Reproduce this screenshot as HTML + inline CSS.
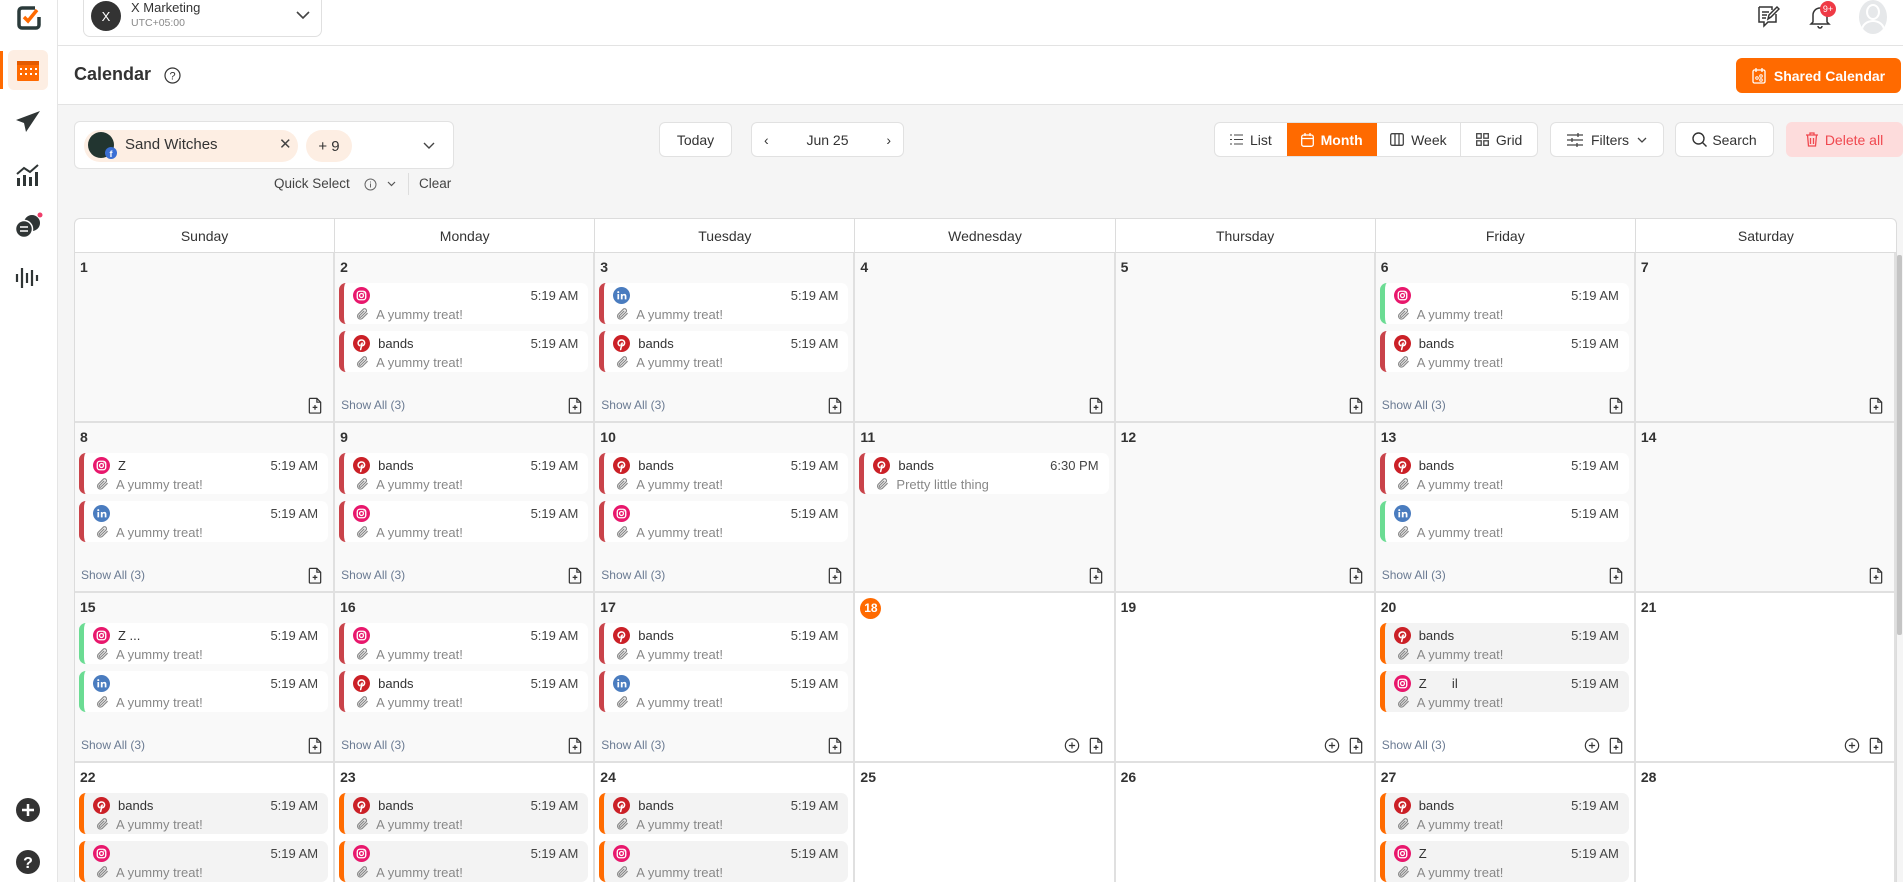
<!DOCTYPE html>
<html><head><meta charset="utf-8">
<style>
*{box-sizing:border-box;margin:0;padding:0}
html,body{width:1903px;height:882px;overflow:hidden}
body{font-family:"Liberation Sans",sans-serif;background:#f5f5f5;color:#333;position:relative}
.abs{position:absolute}
#side{left:0;top:0;width:58px;height:882px;background:#fff;border-right:1px solid #e5e5e5}
#top{left:58px;top:0;right:0;height:46px;background:#fff;border-bottom:1px solid #e3e3e3}
#hdr{left:58px;top:46px;right:0;height:59px;background:#fff;border-bottom:1px solid #e3e3e3}
.btn{position:absolute;background:#fff;border:1px solid #e1e1e1;border-radius:6px;display:flex;align-items:center;justify-content:center;font-size:14px;color:#333;height:35px;top:122px}
#cal{left:74px;top:218px;width:1823px;height:664px;border:1px solid #dcdcdc;border-bottom:none;border-radius:6px 6px 0 0;background:#fff;overflow:hidden}
.hd{display:grid;grid-template-columns:repeat(7,1fr);height:34px;border-bottom:1px solid #dcdcdc}
.hd div{display:flex;align-items:center;justify-content:center;font-size:14px;color:#333;border-right:1px solid #dcdcdc}
.gr{display:grid;grid-template-columns:repeat(7,1fr);grid-auto-rows:170px}
.c{position:relative;border-right:2px solid #e0e0e0;border-bottom:2px solid #e0e0e0;background:#fff}
.c.p{background:#f9f9f9}
.n{font-size:14px;color:#333;padding:6px 0 0 5px;height:30px;font-weight:bold}
.ev{margin:0 5px 7px 4px;height:41px;border-left:5px solid #c9434a;border-radius:7px;background:#f3f3f3;padding:4px 10px 0 9px}
.p .ev{background:#fff}
.ev.g{border-left-color:#6bdc93}.ev.o{border-left-color:#ff6b00}
.l1{display:flex;align-items:center;height:17px;font-size:13px;color:#333}
.l1 svg{width:17px;height:17px;margin-right:8px;flex:none}
.l1 .t{margin-left:auto;color:#444}
.l2{display:flex;align-items:center;height:18px;font-size:13px;color:#888;margin-top:1px}
.l2 svg{width:14px;height:14px;margin:0 7px 0 2px;stroke:#888}
.ft{position:absolute;left:6px;right:10px;bottom:7px;display:flex;align-items:center;height:18px}
.sa{font-size:12px;color:#6a7a92}
.ico{margin-left:auto;display:flex;gap:8px}
.ico svg{width:16px;height:17px}
</style></head><body>
<svg width="0" height="0" style="position:absolute">
<defs>
<symbol id="ig" viewBox="0 0 20 20"><circle cx="10" cy="10" r="10" fill="#e8176c"/><rect x="5" y="5" width="10" height="10" rx="3" fill="none" stroke="#fff" stroke-width="1.6"/><circle cx="10" cy="10" r="2.3" fill="none" stroke="#fff" stroke-width="1.5"/><circle cx="13" cy="7" r=".8" fill="#fff"/></symbol>
<symbol id="pi" viewBox="0 0 20 20"><circle cx="10" cy="10" r="10" fill="#cb2027"/><path d="M9 17l1.8-7.5M8 12.5c-2-.8-2.5-3-1.5-4.8 1.2-2 4.5-2.4 6.2-.8 1.6 1.6 1 4.8-1 5.4-1.3.4-2.3-.4-2-1.5" fill="none" stroke="#fff" stroke-width="1.8" stroke-linecap="round"/></symbol>
<symbol id="li" viewBox="0 0 20 20"><circle cx="10" cy="10" r="10" fill="#4a7cbf"/><rect x="5.2" y="8.3" width="2" height="6.2" fill="#fff"/><circle cx="6.2" cy="6" r="1.2" fill="#fff"/><path d="M9.2 14.5V8.3h1.9v1c.5-.8 1.3-1.2 2.3-1.2 1.6 0 2.4 1 2.4 2.8v3.6h-2v-3.3c0-.9-.3-1.4-1.1-1.4s-1.4.6-1.4 1.5v3.2z" fill="#fff"/></symbol>
<symbol id="clip" viewBox="0 0 24 24"><path d="M21 11l-8.6 8.6a5 5 0 01-7-7L14 4a3.3 3.3 0 014.7 4.7L10 17.3a1.7 1.7 0 01-2.4-2.4L15.5 7" fill="none" stroke-width="2" stroke-linecap="round"/></symbol>
<symbol id="fp" viewBox="0 0 16 18"><path d="M2 1.5h8l4 4v10.5a1 1 0 01-1 1H3a1 1 0 01-1-1V2.5a1 1 0 011-1zM10 1.5v4h4M8 8.5v5M5.5 11h5" fill="none" stroke="#333" stroke-width="1.3"/></symbol>
<symbol id="pc" viewBox="0 0 18 18"><circle cx="9" cy="9" r="7.5" fill="none" stroke="#333" stroke-width="1.3"/><path d="M9 5.5v7M5.5 9h7" stroke="#333" stroke-width="1.3"/></symbol>
</defs></svg>

<div id="side" class="abs">
 <svg class="abs" style="left:16px;top:5px" width="26" height="26" viewBox="0 0 26 26"><path d="M19 3H6a3 3 0 00-3 3v14a3 3 0 003 3h14a3 3 0 003-3v-8" fill="none" stroke="#2a3a3a" stroke-width="3.5"/><path d="M8 12l4 4 9-11" fill="none" stroke="#ff6a00" stroke-width="3.5"/></svg>
 <div class="abs" style="left:0;top:51px;width:3px;height:38px;background:#ff6a00"></div>
 <div class="abs" style="left:8px;top:50px;width:40px;height:40px;background:#fdeee3;border-radius:6px"></div>
 <svg class="abs" style="left:16px;top:58px" width="24" height="24" viewBox="0 0 24 24"><rect x="1" y="3" width="22" height="20" rx="1" fill="#ff6a00"/><rect x="1" y="3" width="22" height="4" fill="#e35a00"/><g fill="#fff"><rect x="4" y="10" width="2" height="2"/><rect x="9" y="10" width="2" height="2"/><rect x="14" y="10" width="2" height="2"/><rect x="19" y="10" width="2" height="2"/><rect x="4" y="15" width="2" height="2"/><rect x="9" y="15" width="2" height="2"/><rect x="14" y="15" width="2" height="2"/><rect x="19" y="15" width="2" height="2"/></g></svg>
 <svg class="abs" style="left:15px;top:110px" width="26" height="24" viewBox="0 0 26 24"><path d="M25 1L1 10l8 3 2 9 4-6 10-15zM9 13L25 1" fill="#2f3535"/></svg>
 <svg class="abs" style="left:15px;top:163px" width="26" height="24" viewBox="0 0 26 24"><path d="M2 11l7-6 6 4 8-7" fill="none" stroke="#2f3535" stroke-width="2"/><g fill="#2f3535"><rect x="2" y="15" width="3" height="8"/><rect x="8" y="12" width="3" height="11"/><rect x="14" y="14" width="3" height="9"/><rect x="20" y="9" width="3" height="14"/></g></svg>
 <svg class="abs" style="left:14px;top:212px" width="30" height="28" viewBox="0 0 30 28"><circle cx="18" cy="11" r="8" fill="#2f3535"/><circle cx="10" cy="17" r="8.5" fill="#2f3535" stroke="#fff" stroke-width="1.5"/><path d="M6 15h8M6 19h8" stroke="#fff" stroke-width="1.6"/><circle cx="26" cy="3" r="2.5" fill="#ef3e6a"/></svg>
 <svg class="abs" style="left:15px;top:265px" width="26" height="26" viewBox="0 0 26 26"><g stroke="#2f3535" stroke-width="2.2"><path d="M2 9v8M7 3v20M12 8v10M17 5v16M22 10v6"/></g></svg>
 <svg class="abs" style="left:16px;top:798px" width="24" height="24"><circle cx="12" cy="12" r="12" fill="#333"/><path d="M12 6v12M6 12h12" stroke="#fff" stroke-width="2.5"/></svg>
 <svg class="abs" style="left:16px;top:850px" width="24" height="24"><circle cx="12" cy="12" r="12" fill="#333"/><text x="12" y="18" font-family="Liberation Sans" font-size="16" font-weight="bold" fill="#fff" text-anchor="middle">?</text></svg>
</div>

<div id="top" class="abs">
 <div class="abs" style="left:25px;top:-1px;width:239px;height:38px;border:1px solid #e0e0e0;border-top:none;border-radius:0 0 7px 7px;background:#fff">
  <div class="abs" style="left:7px;top:2px;width:30px;height:30px;border-radius:50%;background:#333;color:#fff;font-size:13px;display:flex;align-items:center;justify-content:center">X</div>
  <div class="abs" style="left:47px;top:1px;font-size:13px;color:#333">X Marketing</div>
  <div class="abs" style="left:47px;top:18px;font-size:10.5px;color:#888">UTC+05:00</div>
  <svg class="abs" style="left:212px;top:11px" width="14" height="10"><path d="M1 2l6 6 6-6" fill="none" stroke="#444" stroke-width="1.6"/></svg>
 </div>
 <svg class="abs" style="left:1698px;top:4px" width="24" height="24" viewBox="0 0 24 24"><path d="M3 3h13v3M3 3v15h5v4l4-4h8v-8" fill="none" stroke="#333" stroke-width="1.5"/><path d="M6 8h7M6 11h5M6 14h4M12 15l1-4 8-8 2 2-8 8z" fill="none" stroke="#333" stroke-width="1.5"/></svg>
 <svg class="abs" style="left:1750px;top:4px" width="24" height="26" viewBox="0 0 24 26"><path d="M5 18V11a7 7 0 0114 0v7l2 2H3zM10 22a2 2 0 004 0" fill="none" stroke="#333" stroke-width="1.5"/></svg>
 <div class="abs" style="left:1762px;top:1px;width:16px;height:16px;border-radius:50%;background:#ef3a45;color:#fff;font-size:9px;display:flex;align-items:center;justify-content:center">9+</div>
 <div class="abs" style="left:1801px;top:0;width:28px;height:34px;border-radius:50%;background:#e6e8ea;overflow:hidden"><div class="abs" style="left:7px;top:4px;width:14px;height:16px;border-radius:50%;border:2px solid #fff"></div><div class="abs" style="left:2px;top:20px;width:24px;height:20px;border-radius:50%;border:2px solid #fff"></div></div>
</div>

<div id="hdr" class="abs">
 <div class="abs" style="left:16px;top:18px;font-size:18px;font-weight:bold;color:#333">Calendar</div>
 <svg class="abs" style="left:106px;top:21px" width="17" height="17"><circle cx="8.5" cy="8.5" r="7.5" fill="none" stroke="#333" stroke-width="1.2"/><text x="8.5" y="12.5" font-family="Liberation Sans" font-size="11" fill="#333" text-anchor="middle">?</text></svg>
 <div class="abs" style="left:1678px;top:12px;width:165px;height:35px;border-radius:6px;background:#ff6a00;color:#fff;font-size:14px;font-weight:bold;display:flex;align-items:center;justify-content:center;gap:8px"><svg width="14" height="17" viewBox="0 0 14 17"><rect x="1" y="3" width="12" height="13" rx="1.5" fill="none" stroke="#fff" stroke-width="1.3"/><path d="M4 1v4M10 1v4" stroke="#fff" stroke-width="1.3"/><circle cx="5" cy="11" r="1.3" fill="none" stroke="#fff"/><circle cx="9" cy="9" r="1.3" fill="none" stroke="#fff"/><circle cx="9" cy="13" r="1.3" fill="none" stroke="#fff"/></svg>Shared Calendar</div>
</div>

<div class="abs" style="left:74px;top:121px;width:380px;height:48px;background:#fff;border:1px solid #e2e2e2;border-radius:6px">
 <div class="abs" style="left:9px;top:8px;width:214px;height:32px;border-radius:16px;background:#fdeee3"></div>
 <div class="abs" style="left:13px;top:10px;width:26px;height:26px;border-radius:50%;background:#223530"></div>
 <div class="abs" style="left:30px;top:25px;width:12px;height:12px;border-radius:50%;background:#3b6fd4;color:#fff;font-size:9px;font-weight:bold;display:flex;align-items:flex-end;justify-content:center;line-height:10px">f</div>
 <div class="abs" style="left:50px;top:14px;font-size:15px;color:#333">Sand Witches</div>
 <div class="abs" style="left:204px;top:13px;font-size:15px;color:#444">✕</div>
 <div class="abs" style="left:231px;top:8px;width:46px;height:32px;border-radius:16px;background:#fdeee3;font-size:15px;display:flex;align-items:center;justify-content:center">+ 9</div>
 <svg class="abs" style="left:348px;top:20px" width="12" height="8"><path d="M1 1l5 5 5-5" fill="none" stroke="#444" stroke-width="1.4"/></svg>
</div>
<div class="abs" style="left:274px;top:176px;font-size:13.5px;color:#444">Quick Select</div>
<svg class="abs" style="left:364px;top:178px" width="13" height="13"><circle cx="6.5" cy="6.5" r="5.5" fill="none" stroke="#666"/><path d="M6.5 5.5v4M6.5 3.5v1" stroke="#666"/></svg>
<svg class="abs" style="left:387px;top:181px" width="9" height="6"><path d="M1 1l3.5 3.5L8 1" fill="none" stroke="#555" stroke-width="1.2"/></svg>
<div class="abs" style="left:408px;top:173px;width:1px;height:22px;background:#ddd"></div>
<div class="abs" style="left:419px;top:176px;font-size:13.5px;color:#444">Clear</div>

<div class="btn" style="left:659px;width:73px">Today</div>
<div class="btn" style="left:751px;width:153px;justify-content:space-between;padding:0 12px"><span>‹</span><span>Jun 25</span><span>›</span></div>

<div class="btn" style="left:1214px;width:324px;justify-content:flex-start;overflow:hidden">
 <div style="width:72px;display:flex;align-items:center;justify-content:center;gap:7px;height:100%"><svg width="13" height="11"><path d="M0 1h2M4 1h9M0 5.5h2M4 5.5h9M0 10h2M4 10h9" stroke="#444"/></svg>List</div>
 <div style="width:90px;background:#ff6a00;color:#fff;font-weight:bold;display:flex;align-items:center;justify-content:center;gap:7px;height:100%"><svg width="13" height="14"><rect x=".7" y="2" width="11.6" height="11.3" rx="2" fill="none" stroke="#fff" stroke-width="1.3"/><path d="M1 5.5h11M4 0v3M9 0v3" stroke="#fff" stroke-width="1.3"/></svg>Month</div>
 <div style="width:85px;display:flex;align-items:center;justify-content:center;gap:7px;height:100%;border-right:1px solid #e1e1e1"><svg width="14" height="13"><rect x=".7" y=".7" width="12.6" height="11.6" rx="1.5" fill="none" stroke="#444" stroke-width="1.3"/><path d="M5 1v11M9 1v11" stroke="#444" stroke-width="1.3"/></svg>Week</div>
 <div style="width:76px;display:flex;align-items:center;justify-content:center;gap:7px;height:100%"><svg width="13" height="13" fill="none" stroke="#444" stroke-width="1.3"><rect x=".7" y=".7" width="4.5" height="4.5"/><rect x="7.8" y=".7" width="4.5" height="4.5"/><rect x=".7" y="7.8" width="4.5" height="4.5"/><rect x="7.8" y="7.8" width="4.5" height="4.5"/></svg>Grid</div>
</div>
<div class="btn" style="left:1550px;width:114px;gap:8px"><svg width="16" height="14" stroke="#444" stroke-width="1.3"><path d="M0 2h16M0 7h16M0 12h16" /><path d="M11 0v4M5 5v4M10 10v4"/></svg>Filters<svg width="10" height="6"><path d="M1 1l4 4 4-4" fill="none" stroke="#444" stroke-width="1.3"/></svg></div>
<div class="btn" style="left:1675px;width:99px;gap:5px"><svg width="15" height="15"><circle cx="6.5" cy="6.5" r="5.5" fill="none" stroke="#333" stroke-width="1.4"/><path d="M10.5 10.5l4 4" stroke="#333" stroke-width="1.4"/></svg>Search</div>
<div class="btn" style="left:1786px;width:117px;background:#fddcdc;border-color:#fddcdc;color:#f0484f;gap:7px"><svg width="12" height="15" fill="none" stroke="#f0484f" stroke-width="1.3"><path d="M0 3h12M4 3V1h4v2M1.5 3l1 11h7l1-11M4.5 6v6M7.5 6v6"/></svg>Delete all</div>

<div id="cal" class="abs">
 <div class="hd"><div>Sunday</div><div>Monday</div><div>Tuesday</div><div>Wednesday</div><div>Thursday</div><div>Friday</div><div style="border-right:none">Saturday</div></div>
 <div class="gr">
  <div class="c p"><div class="n">1</div><div class="ft"><div class="ico"><svg><use href="#fp"/></svg></div></div></div>
  <div class="c p"><div class="n">2</div>
   <div class="ev"><div class="l1"><svg><use href="#ig"/></svg><span></span><span class="t">5:19 AM</span></div><div class="l2"><svg><use href="#clip"/></svg>A yummy treat!</div></div>
   <div class="ev"><div class="l1"><svg><use href="#pi"/></svg><span>bands</span><span class="t">5:19 AM</span></div><div class="l2"><svg><use href="#clip"/></svg>A yummy treat!</div></div>
   <div class="ft"><span class="sa">Show All (3)</span><div class="ico"><svg><use href="#fp"/></svg></div></div></div>
  <div class="c p"><div class="n">3</div>
   <div class="ev"><div class="l1"><svg><use href="#li"/></svg><span></span><span class="t">5:19 AM</span></div><div class="l2"><svg><use href="#clip"/></svg>A yummy treat!</div></div>
   <div class="ev"><div class="l1"><svg><use href="#pi"/></svg><span>bands</span><span class="t">5:19 AM</span></div><div class="l2"><svg><use href="#clip"/></svg>A yummy treat!</div></div>
   <div class="ft"><span class="sa">Show All (3)</span><div class="ico"><svg><use href="#fp"/></svg></div></div></div>
  <div class="c p"><div class="n">4</div><div class="ft"><div class="ico"><svg><use href="#fp"/></svg></div></div></div>
  <div class="c p"><div class="n">5</div><div class="ft"><div class="ico"><svg><use href="#fp"/></svg></div></div></div>
  <div class="c p"><div class="n">6</div>
   <div class="ev g"><div class="l1"><svg><use href="#ig"/></svg><span></span><span class="t">5:19 AM</span></div><div class="l2"><svg><use href="#clip"/></svg>A yummy treat!</div></div>
   <div class="ev"><div class="l1"><svg><use href="#pi"/></svg><span>bands</span><span class="t">5:19 AM</span></div><div class="l2"><svg><use href="#clip"/></svg>A yummy treat!</div></div>
   <div class="ft"><span class="sa">Show All (3)</span><div class="ico"><svg><use href="#fp"/></svg></div></div></div>
  <div class="c p"><div class="n">7</div><div class="ft"><div class="ico"><svg><use href="#fp"/></svg></div></div></div>
  <div class="c p"><div class="n">8</div>
   <div class="ev"><div class="l1"><svg><use href="#ig"/></svg><span>Z</span><span class="t">5:19 AM</span></div><div class="l2"><svg><use href="#clip"/></svg>A yummy treat!</div></div>
   <div class="ev"><div class="l1"><svg><use href="#li"/></svg><span></span><span class="t">5:19 AM</span></div><div class="l2"><svg><use href="#clip"/></svg>A yummy treat!</div></div>
   <div class="ft"><span class="sa">Show All (3)</span><div class="ico"><svg><use href="#fp"/></svg></div></div></div>
  <div class="c p"><div class="n">9</div>
   <div class="ev"><div class="l1"><svg><use href="#pi"/></svg><span>bands</span><span class="t">5:19 AM</span></div><div class="l2"><svg><use href="#clip"/></svg>A yummy treat!</div></div>
   <div class="ev"><div class="l1"><svg><use href="#ig"/></svg><span></span><span class="t">5:19 AM</span></div><div class="l2"><svg><use href="#clip"/></svg>A yummy treat!</div></div>
   <div class="ft"><span class="sa">Show All (3)</span><div class="ico"><svg><use href="#fp"/></svg></div></div></div>
  <div class="c p"><div class="n">10</div>
   <div class="ev"><div class="l1"><svg><use href="#pi"/></svg><span>bands</span><span class="t">5:19 AM</span></div><div class="l2"><svg><use href="#clip"/></svg>A yummy treat!</div></div>
   <div class="ev"><div class="l1"><svg><use href="#ig"/></svg><span></span><span class="t">5:19 AM</span></div><div class="l2"><svg><use href="#clip"/></svg>A yummy treat!</div></div>
   <div class="ft"><span class="sa">Show All (3)</span><div class="ico"><svg><use href="#fp"/></svg></div></div></div>
  <div class="c p"><div class="n">11</div>
   <div class="ev"><div class="l1"><svg><use href="#pi"/></svg><span>bands</span><span class="t">6:30 PM</span></div><div class="l2"><svg><use href="#clip"/></svg>Pretty little thing</div></div>
   <div class="ft"><div class="ico"><svg><use href="#fp"/></svg></div></div></div>
  <div class="c p"><div class="n">12</div><div class="ft"><div class="ico"><svg><use href="#fp"/></svg></div></div></div>
  <div class="c p"><div class="n">13</div>
   <div class="ev"><div class="l1"><svg><use href="#pi"/></svg><span>bands</span><span class="t">5:19 AM</span></div><div class="l2"><svg><use href="#clip"/></svg>A yummy treat!</div></div>
   <div class="ev g"><div class="l1"><svg><use href="#li"/></svg><span></span><span class="t">5:19 AM</span></div><div class="l2"><svg><use href="#clip"/></svg>A yummy treat!</div></div>
   <div class="ft"><span class="sa">Show All (3)</span><div class="ico"><svg><use href="#fp"/></svg></div></div></div>
  <div class="c p"><div class="n">14</div><div class="ft"><div class="ico"><svg><use href="#fp"/></svg></div></div></div>
  <div class="c p"><div class="n">15</div>
   <div class="ev g"><div class="l1"><svg><use href="#ig"/></svg><span>Z ...</span><span class="t">5:19 AM</span></div><div class="l2"><svg><use href="#clip"/></svg>A yummy treat!</div></div>
   <div class="ev g"><div class="l1"><svg><use href="#li"/></svg><span></span><span class="t">5:19 AM</span></div><div class="l2"><svg><use href="#clip"/></svg>A yummy treat!</div></div>
   <div class="ft"><span class="sa">Show All (3)</span><div class="ico"><svg><use href="#fp"/></svg></div></div></div>
  <div class="c p"><div class="n">16</div>
   <div class="ev"><div class="l1"><svg><use href="#ig"/></svg><span></span><span class="t">5:19 AM</span></div><div class="l2"><svg><use href="#clip"/></svg>A yummy treat!</div></div>
   <div class="ev"><div class="l1"><svg><use href="#pi"/></svg><span>bands</span><span class="t">5:19 AM</span></div><div class="l2"><svg><use href="#clip"/></svg>A yummy treat!</div></div>
   <div class="ft"><span class="sa">Show All (3)</span><div class="ico"><svg><use href="#fp"/></svg></div></div></div>
  <div class="c p"><div class="n">17</div>
   <div class="ev"><div class="l1"><svg><use href="#pi"/></svg><span>bands</span><span class="t">5:19 AM</span></div><div class="l2"><svg><use href="#clip"/></svg>A yummy treat!</div></div>
   <div class="ev"><div class="l1"><svg><use href="#li"/></svg><span></span><span class="t">5:19 AM</span></div><div class="l2"><svg><use href="#clip"/></svg>A yummy treat!</div></div>
   <div class="ft"><span class="sa">Show All (3)</span><div class="ico"><svg><use href="#fp"/></svg></div></div></div>
  <div class="c"><div class="n"><span style="display:inline-flex;width:21px;height:21px;border-radius:50%;background:#ff6a00;color:#fff;font-size:12px;align-items:center;justify-content:center;margin-top:-2px">18</span></div><div class="ft"><div class="ico"><svg><use href="#pc"/></svg><svg><use href="#fp"/></svg></div></div></div>
  <div class="c"><div class="n">19</div><div class="ft"><div class="ico"><svg><use href="#pc"/></svg><svg><use href="#fp"/></svg></div></div></div>
  <div class="c"><div class="n">20</div>
   <div class="ev o"><div class="l1"><svg><use href="#pi"/></svg><span>bands</span><span class="t">5:19 AM</span></div><div class="l2"><svg><use href="#clip"/></svg>A yummy treat!</div></div>
   <div class="ev o"><div class="l1"><svg><use href="#ig"/></svg><span>Z&nbsp;&nbsp;&nbsp;&nbsp;&nbsp;&nbsp;&nbsp;il</span><span class="t">5:19 AM</span></div><div class="l2"><svg><use href="#clip"/></svg>A yummy treat!</div></div>
   <div class="ft"><span class="sa">Show All (3)</span><div class="ico"><svg><use href="#pc"/></svg><svg><use href="#fp"/></svg></div></div></div>
  <div class="c"><div class="n">21</div><div class="ft"><div class="ico"><svg><use href="#pc"/></svg><svg><use href="#fp"/></svg></div></div></div>
  <div class="c"><div class="n">22</div>
   <div class="ev o"><div class="l1"><svg><use href="#pi"/></svg><span>bands</span><span class="t">5:19 AM</span></div><div class="l2"><svg><use href="#clip"/></svg>A yummy treat!</div></div>
   <div class="ev o"><div class="l1"><svg><use href="#ig"/></svg><span></span><span class="t">5:19 AM</span></div><div class="l2"><svg><use href="#clip"/></svg>A yummy treat!</div></div></div>
  <div class="c"><div class="n">23</div>
   <div class="ev o"><div class="l1"><svg><use href="#pi"/></svg><span>bands</span><span class="t">5:19 AM</span></div><div class="l2"><svg><use href="#clip"/></svg>A yummy treat!</div></div>
   <div class="ev o"><div class="l1"><svg><use href="#ig"/></svg><span></span><span class="t">5:19 AM</span></div><div class="l2"><svg><use href="#clip"/></svg>A yummy treat!</div></div></div>
  <div class="c"><div class="n">24</div>
   <div class="ev o"><div class="l1"><svg><use href="#pi"/></svg><span>bands</span><span class="t">5:19 AM</span></div><div class="l2"><svg><use href="#clip"/></svg>A yummy treat!</div></div>
   <div class="ev o"><div class="l1"><svg><use href="#ig"/></svg><span></span><span class="t">5:19 AM</span></div><div class="l2"><svg><use href="#clip"/></svg>A yummy treat!</div></div></div>
  <div class="c"><div class="n">25</div></div>
  <div class="c"><div class="n">26</div></div>
  <div class="c"><div class="n">27</div>
   <div class="ev o"><div class="l1"><svg><use href="#pi"/></svg><span>bands</span><span class="t">5:19 AM</span></div><div class="l2"><svg><use href="#clip"/></svg>A yummy treat!</div></div>
   <div class="ev o"><div class="l1"><svg><use href="#ig"/></svg><span>Z</span><span class="t">5:19 AM</span></div><div class="l2"><svg><use href="#clip"/></svg>A yummy treat!</div></div></div>
  <div class="c"><div class="n">28</div></div>
 </div>
</div>
<div class="abs" style="left:1897px;top:255px;width:5px;height:380px;background:#c4c4c4;border-radius:2px"></div>
</body></html>
